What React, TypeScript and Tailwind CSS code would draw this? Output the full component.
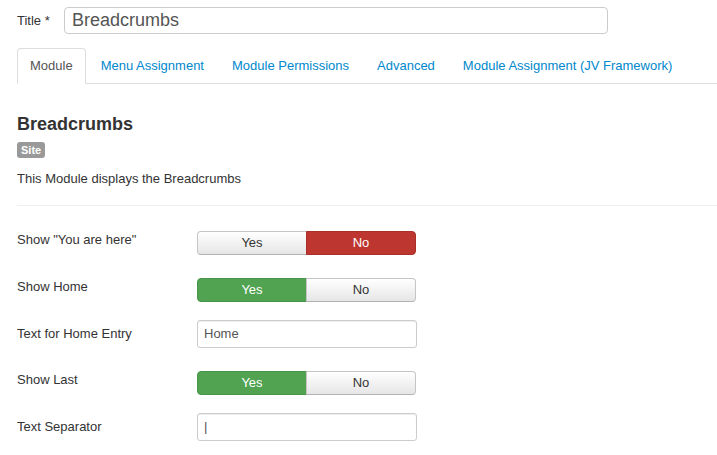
const tabs = ['Module', 'Menu Assignment', 'Module Permissions', 'Advanced', 'Module Assignment (JV Framework)'];

function Toggle({ value }: { value: 'yes' | 'no' }) {
  const base = 'flex h-6 w-[110px] items-center justify-center border text-[13px]';
  const off = 'border-[#c5c5c5] border-b-[#b3b3b3] bg-gradient-to-b from-white to-[#e6e6e6] text-[#333]';
  return (
    <div className="flex pt-[5px]">
      <div
        className={`${base} rounded-l-[4px] ${
          value === 'yes' ? 'border-[#46954a] bg-[#51a351] text-white' : off
        }`}>
        Yes
      </div>
      <div
        className={`${base} -ml-px rounded-r-[4px] ${
          value === 'no' ? 'border-[#a9302a] bg-[#bd362f] text-white' : off
        }`}>
        No
      </div>
    </div>
  );
}

function TextInput({ value }: { value: string }) {
  return (
    <div className="flex h-7 w-[220px] items-center rounded-[3px] border border-[#ccc] bg-white px-[6px] text-[13px] text-[#555] shadow-[inset_0_1px_1px_rgba(0,0,0,0.075)]">
      {value}
    </div>
  );
}

function Row({ label, children }: { label: string; children: React.ReactNode }) {
  return (
    <div className="mb-[18px] flex">
      <div className="w-[180px] pt-[5px] text-[13px] leading-[18px] text-[#333]">{label}</div>
      {children}
    </div>
  );
}

export default function App() {
  return (
    <div className="h-[455px] w-[717px] overflow-hidden bg-white pl-[17px] font-['Liberation_Sans',Arial,sans-serif] text-[#333]">
      <div className="flex items-center pt-[7px]">
        <span className="w-[47px] text-[13px]">Title *</span>
        <div className="flex h-[27px] w-[544px] items-center rounded-[4px] border border-[#ccc] px-[7px] text-[18px] text-[#555]">
          Breadcrumbs
        </div>
      </div>

      <div className="mt-[14px] flex border-b border-[#ddd]">
        {tabs.map((tab, i) => (
          <div
            key={tab}
            className={`-mb-px mr-[2px] px-3 py-2 text-[13px] leading-[18px] ${
              i === 0
                ? 'rounded-t-[4px] border border-[#ddd] border-b-white bg-white text-[#555]'
                : 'border border-transparent text-[#0088cc]'
            }`}>
            {tab}
          </div>
        ))}
      </div>

      <h2 className="mt-[30px] text-[18px] font-bold leading-[20px]">Breadcrumbs</h2>
      <div className="mt-[8px] flex h-4 w-fit items-center rounded-[3px] bg-[#999] px-[4px] text-[11px] font-bold text-white">
        Site
      </div>
      <p className="mt-[12px] text-[13px] leading-[18px]">This Module displays the Breadcrumbs</p>
      <hr className="mb-[20px] mt-[17px] border-[#eee]" />

      <Row label={'Show "You are here"'}>
        <Toggle value="no" />
      </Row>
      <Row label="Show Home">
        <Toggle value="yes" />
      </Row>
      <Row label="Text for Home Entry">
        <TextInput value="Home" />
      </Row>
      <Row label="Show Last">
        <Toggle value="yes" />
      </Row>
      <Row label="Text Separator">
        <TextInput value="|" />
      </Row>
    </div>
  );
}
